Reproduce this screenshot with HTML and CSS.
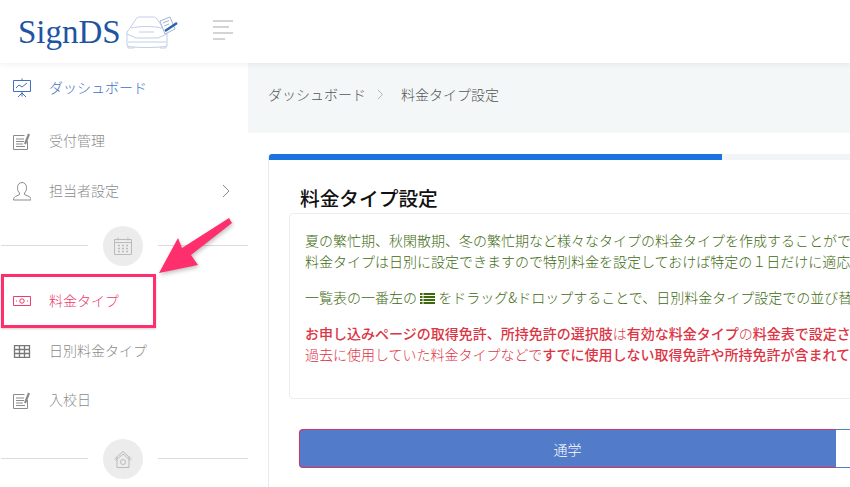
FILE: index.html
```html
<!DOCTYPE html>
<html lang="ja">
<head>
    <meta charset="UTF-8">
    <meta name="viewport" content="width=device-width, initial-scale=1.0">
    <title>料金タイプ設定</title>
    <link rel="stylesheet" href="styles.css">
</head>
<body>
    <header class="topbar">
        <div class="logo">
            <span class="logo-text">SignDS</span>
            <svg class="logo-car" width="53" height="33" viewBox="0 0 53 33" fill="none" stroke="#bfcfe6" stroke-width="1">
                <path d="M2 30V16l3-4 6-9c1-1.500 2-2 4-2h13c2 0 3 .5 4 2l6 9 4 4v14"/>
                <path d="M6 12c9-2 22-2 31 0M2 18l9 4h22l9-4M3 26h38M2 30c8 2 32 2 40 0M14 16h15"/>
                <path d="M3 30.500v1.500h6v-1M35 31v1h6v-1.500"/>
                <path d="M35 5l10-4 5 12-10 5z" stroke="#9fb6d8" fill="#fff"/>
                <path d="M38 7l6-2.500M39 10l5-2" stroke="#9fb6d8"/>
                <path d="M40 15l12-8" stroke="#2b62ad" stroke-width="2.500"/>
            </svg>
        </div>
        <button class="menu-btn" aria-label="menu">
            <span class="bar"></span>
            <span class="bar short"></span>
            <span class="bar"></span>
            <span class="bar shorter"></span>
        </button>
    </header>

    <div class="layout">
        <nav class="sidebar">
            <a class="nav-item active-blue">
                <svg class="nav-icon" width="18" height="20" viewBox="0 0 18 20" fill="none" stroke="currentColor">
                    <path d="M.5 2.500h17v11H.5zM9 .5v2M9 13.500v5M9 15l-4 4M9 15l4 4"/>
                    <path d="M3 10l3-3 3 2 5-4"/>
                </svg>
                <span>ダッシュボード</span>
            </a>
            <a class="nav-item nav-item-gap">
                <svg class="nav-icon" width="18" height="17" viewBox="0 0 18 17" fill="none" stroke="currentColor">
                    <path d="M14.500 8v8.500H.5V2.500h11M3 6h8M3 8.500h8M3 11h7M3 13.500h9"/>
                    <path d="M12 11l4-10" stroke-width="2.200"/>
                </svg>
                <span>受付管理</span>
            </a>
            <a class="nav-item">
                <svg class="nav-icon" width="18" height="19" viewBox="0 0 18 19" fill="none" stroke="currentColor">
                    <path d="M6.500 11C5 9.500 4.500 8 4.500 5.500c0-3 2-5 4.500-5s4.500 2 4.500 5c0 2.500-.5 4-2 5.500v1.500l4.500 2c1 .5 2 1.500 2 3.500H.5c0-2 1-3 2-3.500l4-2z"/>
                </svg>
                <span>担当者設定</span>
                <svg class="nav-arrow" width="8" height="14" viewBox="0 0 8 14" fill="none" stroke="currentColor">
                    <path d="M1 1l6 6-6 6"/>
                </svg>
            </a>

            <div class="nav-sep">
                <span class="sep-circle">
                    <svg width="18" height="18" viewBox="0 0 18 18" fill="none" stroke="#bbb">
                        <path d="M.5 2.500h17v15H.5zM4 .5v3M14 .5v3M.5 5.500h17"/>
                        <path d="M4 8.500h2M8 8.500h2M12 8.500h2M4 11.500h2M8 11.500h2M12 11.500h2M4 14.500h2M8 14.500h2M12 14.500h2" stroke-width="1.500"/>
                    </svg>
                </span>
            </div>

            <a class="nav-item active-pink">
                <svg class="nav-icon" width="18" height="10" viewBox="0 0 18 10" fill="none" stroke="currentColor">
                    <path d="M.5.5h17v9H.5z"/>
                    <circle cx="9" cy="5" r="2.200"/>
                    <path d="M3 5h1M14 5h1"/>
                </svg>
                <span>料金タイプ</span>
            </a>
            <a class="nav-item">
                <svg class="nav-icon icon-dark" width="16" height="13" viewBox="0 0 16 13" fill="none" stroke="currentColor" stroke-width="1.300">
                    <path d="M.5.5h15v12H.5zM.5 4.500h15M.5 8.500h15M5.500.5v12M10.500.5v12"/>
                </svg>
                <span>日別料金タイプ</span>
            </a>
            <a class="nav-item nav-item-up">
                <svg class="nav-icon" width="18" height="17" viewBox="0 0 18 17" fill="none" stroke="currentColor">
                    <path d="M14.500 8v8.500H.5V2.500h11M3 6h8M3 8.500h8M3 11h7M3 13.500h9"/>
                    <path d="M12 11l4-10" stroke-width="2.200"/>
                </svg>
                <span>入校日</span>
            </a>

            <div class="nav-sep nav-sep-last">
                <span class="sep-circle">
                    <svg width="18" height="17" viewBox="0 0 18 17" fill="none" stroke="#bbb">
                        <path d="M.5 8L9 .5 17.500 8M3 6v10.500h12V6M1.500 9.500L9 3l7.500 6.500"/>
                        <circle cx="9" cy="11" r="2.500"/>
                    </svg>
                </span>
            </div>
        </nav>

        <main class="main">
            <div class="breadcrumb">
                <span>ダッシュボード</span>
                <svg class="crumb-sep" width="7" height="11" viewBox="0 0 7 11" fill="none" stroke="#b5b5b5">
                    <path d="M1 1l4.500 4.500L1 10"/>
                </svg>
                <span>料金タイプ設定</span>
            </div>

            <div class="content">
                <section class="card">
                    <div class="progress"><div class="progress-fill"></div></div>
                    <div class="card-body">
                        <h1 class="card-title">料金タイプ設定</h1>
                        <div class="notice">
                            <p class="green">夏の繁忙期、秋閑散期、冬の繁忙期など様々なタイプの料金タイプを作成することができます。<br>料金タイプは日別に設定できますので特別料金を設定しておけば特定の１日だけに適応させることができます。</p>
                            <p class="green">一覧表の一番左の
                                <svg class="drag-icon" width="15" height="11" viewBox="0 0 15 11" fill="#3a6a0a">
                                    <path d="M0 0h2.500v2H0zM0 3h2.500v2H0zM0 6h2.500v2H0zM0 9h2.500v2H0zM3.500 0H15v2H3.500zM3.500 3H15v2H3.500zM3.500 6H15v2H3.500zM3.500 9H15v2H3.500z"/>
                                </svg>
                                をドラッグ&amp;ドロップすることで、日別料金タイプ設定での並び替えができます。</p>
                            <p class="red"><b>お申し込みページの取得免許、所持免許の選択肢</b>は<b>有効な料金タイプ</b>の<b>料金表で設定されている</b><br>過去に使用していた料金タイプなどで<b>すでに使用しない取得免許や所持免許が含まれている場合</b></p>
                        </div>
                        <div class="tabs">
                            <div class="tab tab-on">通学</div>
                            <div class="tab tab-off">合宿</div>
                        </div>
                    </div>
                </section>
            </div>
        </main>
    </div>

    <!-- annotation drawn over the screenshot -->
    <div class="note-box"></div>
    <svg class="note-arrow" width="90" height="70" viewBox="0 0 90 70">
        <path d="M2 56L21 21l4 10L72 1l3 5-41 32 7 10z" fill="#ff2f6e"/>
    </svg>
</body>
</html>
```

FILE: styles.css
```css
html, body {
    margin: 0;
    padding: 0;
    height: 100%;
    overflow: hidden;
    background-color: white;
}

body {
    font-family: "Noto Sans CJK JP", "Noto Sans", sans-serif;
    font-size: 14px;
    font-weight: 300;
    color: #555;
}

.topbar {
    position: relative;
    z-index: 2;
    display: flex;
    align-items: center;
    height: 63px;
    background-color: white;
    box-shadow: 0 1px 6px rgba(0, 0, 0, 0.07);
}

.logo {
    display: flex;
    align-items: center;
    width: 213px;
    padding-left: 18px;
    box-sizing: border-box;
}

.logo-text {
    font-family: "Liberation Serif", serif;
    font-size: 33px;
    font-weight: 400;
    color: #1d54a3;
    line-height: 40px;
}

.logo-car {
    margin-left: 4px;
    margin-top: 1px;
}

.menu-btn {
    display: flex;
    flex-direction: column;
    gap: 4px;
    width: 20px;
    padding: 0;
    margin-top: -3px;
    border: 0;
    background: none;
}

.bar {
    display: block;
    width: 20px;
    height: 2px;
    background-color: #d4d4d4;
}

.bar.short {
    width: 16px;
}

.bar.shorter {
    width: 12px;
}

.layout {
    display: flex;
    height: 424px;
}

.sidebar {
    flex: 0 0 248px;
    background-color: white;
}

.nav-item {
    display: flex;
    align-items: center;
    height: 50px;
    padding-left: 13px;
    color: #8b8b8b;
}

.nav-item-gap {
    margin-top: 3px;
}

.nav-item-up {
    margin-top: -1px;
}

.nav-item span {
    margin-left: 18px;
    padding-bottom: 2px;
}

.nav-icon {
    flex: 0 0 18px;
}

.icon-dark {
    color: #777;
}

.nav-arrow {
    margin-left: auto;
    margin-right: 18px;
}

.active-blue {
    color: #4470c4;
}

.active-pink {
    color: #ee3a6d;
}

.nav-sep {
    position: relative;
    display: flex;
    justify-content: center;
    height: 40px;
    margin: 10px 0;
}

.nav-sep::before {
    content: "";
    position: absolute;
    left: 1px;
    right: 0;
    top: 19px;
    border-top: 1px solid #dcdcdc;
}

.nav-sep-last {
    margin-top: 14px;
}

.sep-circle {
    position: relative;
    display: flex;
    align-items: center;
    justify-content: center;
    width: 40px;
    height: 40px;
    margin-right: 2px;
    border-radius: 50%;
    background-color: #ececec;
    box-shadow: 0 0 0 15px white;
    clip-path: inset(0 -15px 0 -15px);
}

.main {
    flex: 1;
    min-width: 0;
}

.breadcrumb {
    display: flex;
    align-items: center;
    height: 70px;
    padding-left: 20px;
    padding-bottom: 8px;
    box-sizing: border-box;
    background-color: #f4f7f8;
    color: #555;
}

.crumb-sep {
    margin: 0 17px 0 11px;
}

.content {
    padding: 21px 0 0 20px;
}

.card {
    width: 906px;
    border-left: 1px solid #e3ebee;
    border-radius: 4px 0 0 0;
}

.progress {
    height: 6px;
    background-color: #f2f5f7;
    border-radius: 3px 0 0 0;
    overflow: hidden;
}

.progress-fill {
    width: 50%;
    height: 100%;
    background-color: #1c72de;
}

.card-body {
    padding: 23px 0 40px 20px;
}

.card-title {
    margin: 0 0 0 11px;
    font-size: 19.7px;
    font-weight: 500;
    line-height: 30px;
    color: #111;
}

.notice {
    box-sizing: border-box;
    height: 186px;
    padding: 16px 15px 0;
    border: 1px solid #ededed;
    border-radius: 4px;
    white-space: nowrap;
    line-height: 21px;
}

.notice p {
    margin: 0 0 15px;
}

.notice b {
    font-weight: 500;
}

.green {
    color: #3f6b12;
}

.red {
    color: #dc3545;
}

.drag-icon {
    vertical-align: -1px;
}

.tabs {
    display: flex;
    margin: 30px 0 0 10px;
}

.tab {
    flex: none;
    display: flex;
    align-items: center;
    justify-content: center;
    box-sizing: border-box;
    width: 536px;
    height: 39px;
}

.tab-on {
    background-color: #527bc9;
    border: 1px solid #d9345f;
    border-right: 0;
    border-radius: 4px 0 0 4px;
    color: white;
}

.tab-off {
    border: 1px solid #527bc9;
    color: #527bc9;
}

.note-box {
    position: absolute;
    left: 1px;
    top: 274px;
    width: 149px;
    height: 48px;
    border: 3px solid #ff2f6e;
    box-shadow: 0 1px 2px rgba(0, 0, 0, 0.2);
}

.note-arrow {
    position: absolute;
    left: 157px;
    top: 217px;
    filter: drop-shadow(1px 2px 2px rgba(0, 0, 0, 0.25));
}
```
